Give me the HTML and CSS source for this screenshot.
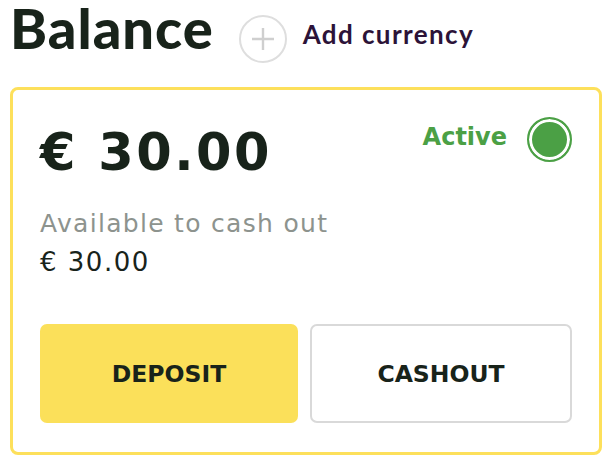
FILE: index.html
```html
<!DOCTYPE html>
<html lang="en">
<head>
  <meta charset="UTF-8">
  <title>Balance</title>
  <link rel="stylesheet" href="styles.css">
</head>
<body>
  <div class="header">
    <h1>Balance</h1>
    <button class="add-btn" aria-label="Add currency">
      <svg width="24" height="24" viewBox="0 0 24 24"><path d="M12 1v22M1 12h22" stroke="#cfcfcf" stroke-width="2.4" fill="none"/></svg>
    </button>
    <span class="add-label">Add currency</span>
  </div>

  <div class="card">
    <div class="card-top">
      <div class="amount">€ 30.00</div>
      <div class="status">
        <span class="status-text">Active</span>
        <span class="dot"></span>
      </div>
    </div>
    <div class="available">Available to cash out</div>
    <div class="available-amount">€ 30.00</div>
    <div class="actions">
      <button class="btn deposit">DEPOSIT</button>
      <button class="btn cashout">CASHOUT</button>
    </div>
  </div>
</body>
</html>
```
FILE: styles.css
```css
* { box-sizing: border-box; }
body {
  margin: 0;
  padding: 0 12px 0 10px;
  font-family: "DejaVu Sans", sans-serif;
  background: #fff;
  color: #18231a;
}
.header {
  display: flex;
  align-items: flex-start;
  height: 87px;
}
h1 {
  margin: 0;
  font-family: Lato, sans-serif;
  font-size: 56px;
  line-height: 1;
  font-weight: 900;
  letter-spacing: 1px;
  color: #18231a;
}
.add-btn {
  width: 48px; height: 48px;
  margin: 15px 0 0 25px;
  border: 2px solid #dedede;
  border-radius: 50%;
  background: #fff;
  display: flex; align-items: center; justify-content: center;
  padding: 0;
}
.add-label {
  margin: 21px 0 0 16px;
  font-family: Lato, sans-serif;
  font-size: 26px;
  line-height: 1;
  font-weight: 700;
  letter-spacing: 1.4px;
  color: #2c1338;
}
.card {
  border: 3px solid #fde05b;
  border-radius: 8px;
  padding: 27px 27px 29px 27px;
}
.card-top {
  display: flex;
  justify-content: space-between;
  align-items: flex-start;
}
.amount {
  margin-top: 10px;
  font-size: 51px;
  font-weight: 700;
  line-height: 1;
  letter-spacing: 2.5px;
}
.status {
  display: flex;
  align-items: center;
  gap: 20px;
  color: #4ba045;
  font-size: 24px;
  font-weight: 700;
  line-height: 1;
}
.status-text { margin-bottom: 6px; }
.dot {
  width: 45px; height: 45px;
  border: 2px solid #4ba045;
  border-radius: 50%;
  background: #4ba045;
  box-shadow: inset 0 0 0 3px #fff;
}
.available {
  margin-top: 33px;
  font-size: 25px;
  line-height: 1;
  letter-spacing: 1.3px;
  color: #8d938e;
}
.available-amount {
  margin-top: 13px;
  font-size: 26px;
  line-height: 1;
  letter-spacing: 1.5px;
}
.actions {
  display: flex;
  gap: 12px;
  margin-top: 49px;
}
.btn {
  flex: 1;
  height: 99px;
  border-radius: 7px;
  font-family: inherit;
  font-size: 23.5px;
  font-weight: 700;
  color: #18231a;
}
.deposit {
  background: #fbe05a;
  border: none;
}
.cashout {
  background: #fff;
  border: 2px solid #d9d9d9;
}
```
